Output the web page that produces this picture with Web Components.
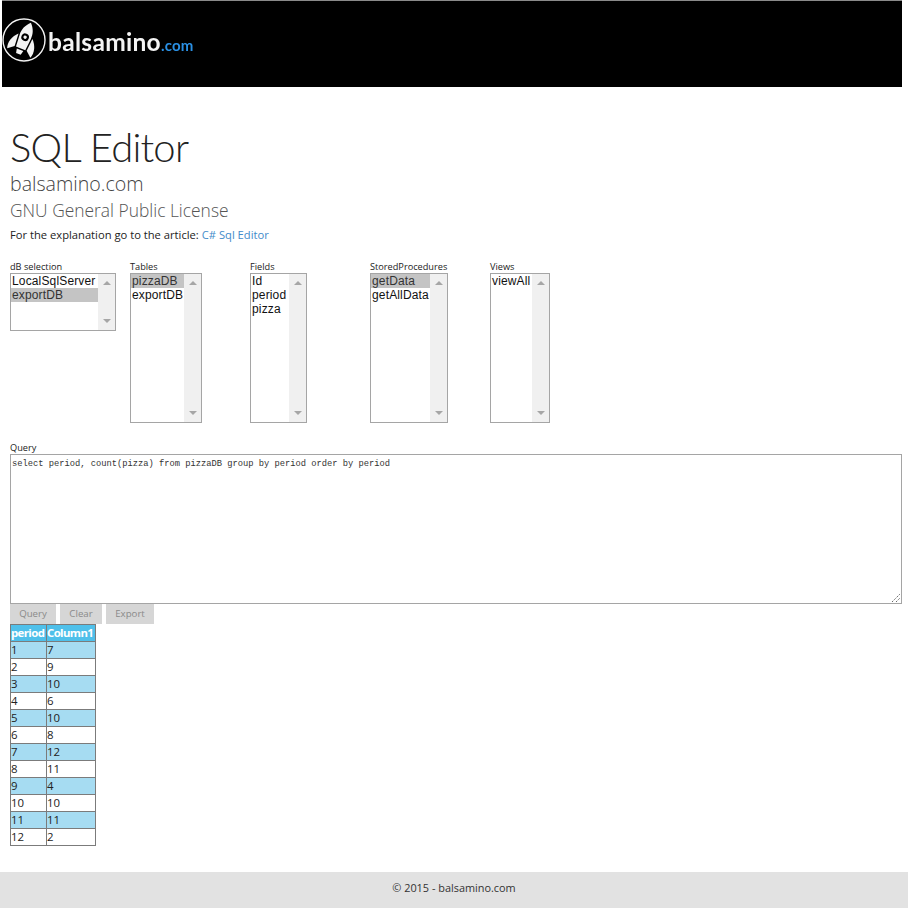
<!DOCTYPE html>
<html>
<head>
<meta charset="utf-8">
<title>SQL Editor</title>
<style>
  html, body { margin: 0; padding: 0; background: #fff; }
  body { font-family: "Open Sans", "Liberation Sans", sans-serif; color: #222; }
</style>
</head>
<body>
<app-header></app-header>
<page-intro heading="SQL Editor" site="balsamino.com" license="GNU General Public License">
  For the explanation go to the article: <a href="#">C# Sql Editor</a>
</page-intro>
<list-row>
  <sql-list label="dB selection" items="LocalSqlServer,exportDB" selected="1" box-width="106" box-height="58"></sql-list>
  <sql-list label="Tables" items="pizzaDB,exportDB" selected="0" box-width="72" box-height="150"></sql-list>
  <sql-list label="Fields" items="Id,period,pizza" box-width="57" box-height="150"></sql-list>
  <sql-list label="StoredProcedures" items="getData,getAllData" selected="0" box-width="78" box-height="150"></sql-list>
  <sql-list label="Views" items="viewAll" box-width="60" box-height="150"></sql-list>
</list-row>
<query-box label="Query">select period, count(pizza) from pizzaDB group by period order by period</query-box>
<button-row>
  <action-button style="width:46px">Query</action-button>
  <action-button style="width:42px">Clear</action-button>
  <action-button style="width:48px">Export</action-button>
</button-row>
<result-table></result-table>
<app-footer>© 2015 - balsamino.com</app-footer>

<script>
// small helper, every element just sets its shadow html once
class Base extends HTMLElement {
  render(html) {
    if (!this.shadowRoot) this.attachShadow({ mode: "open" });
    this.shadowRoot.innerHTML = html;
  }
}

class AppHeader extends Base {
  connectedCallback() {
    this.render(`
    <style>
      :host { display: block; border-top: 1px solid #8a8a8a; margin-left: 2px; width: 900px; }
      .bar { background: #000; height: 86px; display: flex; align-items: flex-start; box-sizing: border-box; padding: 16px 0 0 0; }
      .logo { display: flex; align-items: flex-start; filter: blur(.35px); }
      svg { display: block; flex: none; }
      .name { font: 700 24.5px/30px Lato, "Open Sans", sans-serif; color: #f4f4f4; letter-spacing: .3px; margin: 10px 0 0 0; }
      .tld { font: 700 15px/30px Lato, "Open Sans", sans-serif; color: #2a90e4; letter-spacing: .2px; margin: 13px 0 0 0; }
    </style>
    <div class="bar"><div class="logo">
      <svg width="46" height="46" viewBox="0 0 46 46">
        <circle cx="22" cy="23" r="21" fill="none" stroke="#f2f2f2" stroke-width="1.4"/>
        <g transform="rotate(22 22 23)" fill="#f4f4f4">
          <path d="M22 4.5 C26.5 9 28.5 14 28 20 L27 32 L17 32 L16 20 C15.500 14 17.500 9 22 4.500 Z"/>
          <circle cx="22" cy="20" r="3.8" fill="#000"/>
          <circle cx="22" cy="20" r="1.7" fill="#f4f4f4"/>
          <path d="M14.500 19 L15.500 32 L9.500 37 C7 31 9.500 24 14.500 19 Z"/>
          <path d="M29.500 19 L28.500 32 L34.500 37 C37 31 34.500 24 29.500 19 Z"/>
          <path d="M18.500 33.500 L25.500 33.500 L24.500 38 L19.500 38 Z"/>
        </g>
      </svg>
      <span class="name">balsamino</span><span class="tld">.com</span>
    </div></div>`);
  }
}

class PageIntro extends Base {
  connectedCallback() {
    this.render(`
    <style>
      :host { display: block; padding: 36px 10px 0; }
      h1 { margin: 0; font: 300 40px/48px Lato, "Open Sans", sans-serif; color: #222; letter-spacing: -.8px; }
      h2 { margin: 0; font: 300 19.6px/26px "Open Sans", sans-serif; color: #444; }
      h3 { margin: 0; font: 300 17.4px/27px "Open Sans", sans-serif; color: #555; }
      p { margin: 0; font: 400 11.2px/22px "Open Sans", sans-serif; color: #222; }
      ::slotted(a) { color: #428bca; text-decoration: none; }
    </style>
    <h1>${this.getAttribute("heading")}</h1>
    <h2>${this.getAttribute("site")}</h2>
    <h3>${this.getAttribute("license")}</h3>
    <p><slot></slot></p>`);
  }
}

class ListRow extends Base {
  connectedCallback() {
    this.render(`
    <style>
      :host { display: grid; grid-template-columns: repeat(5, 120px); align-items: start; padding: 15px 10px 0; height: 181px; }
    </style>
    <slot></slot>`);
  }
}

class SqlList extends Base {
  connectedCallback() {
    const items = this.getAttribute("items").split(",");
    const sel = this.getAttribute("selected");
    const w = this.getAttribute("box-width");
    const h = this.getAttribute("box-height");
    const rows = items.map((t, i) => `<div class="opt${String(i) === sel ? " on" : ""}">${t}</div>`).join("");
    this.render(`
    <style>
      :host { display: block; }
      label { display: block; font: 400 9.2px/12px "Open Sans", sans-serif; color: #222; height: 12px; white-space: nowrap; }
      .box { box-sizing: border-box; width: ${w}px; height: ${h}px; border: 1px solid #a5a5a5; display: flex; background: #fff; }
      .rows { flex: 1; min-width: 0; }
      .opt { font: 12px/14px "Liberation Sans", sans-serif; color: #111; padding-left: 1px; height: 14px; white-space: nowrap; letter-spacing: .15px; }
      .opt.on { background: #c4c4c4; color: #333; }
      .bar { flex: none; width: 17px; background: #f0f0f0; display: flex; flex-direction: column; justify-content: space-between; align-items: center; padding: 7px 0 7px; box-sizing: border-box; }
      .up { border: 4px solid transparent; border-top: 0; border-bottom: 4px solid #a6a6a6; }
      .down { border: 4px solid transparent; border-bottom: 0; border-top: 4px solid #a6a6a6; }
    </style>
    <label>${this.getAttribute("label")}</label>
    <div class="box"><div class="rows">${rows}</div><div class="bar"><i class="up"></i><i class="down"></i></div></div>`);
  }
}

class QueryBox extends Base {
  connectedCallback() {
    this.render(`
    <style>
      :host { display: block; padding: 0 6px 0 10px; }
      label { display: block; font: 400 9.2px/12px "Open Sans", sans-serif; color: #222; height: 12px; }
      .area { position: relative; box-sizing: border-box; width: 892px; height: 150px; border: 1px solid #a5a5a5; padding: 3px 1px; font: 8.75px/12px "Liberation Mono", monospace; color: #333; }
      svg { position: absolute; right: 0; bottom: 0; }
    </style>
    <label>${this.getAttribute("label")}</label>
    <div class="area"><slot></slot>
      <svg width="10" height="10" viewBox="0 0 10 10"><path d="M1 9 L9 1 M5 9 L9 5" stroke="#666" stroke-width="1" stroke-dasharray="1.4 1"/></svg>
    </div>`);
  }
}

class ButtonRow extends Base {
  connectedCallback() {
    this.render(`
    <style>
      :host { display: flex; gap: 4px; padding: 0 10px; height: 20px; }
    </style>
    <slot></slot>`);
  }
}

class ActionButton extends Base {
  connectedCallback() {
    this.render(`
    <style>
      :host { display: block; box-sizing: border-box; height: 20px; background: #d6d6d6; color: #8a8a8a; text-align: center; font: 400 9.7px/20px "Open Sans", sans-serif; }
    </style>
    <slot></slot>`);
  }
}

class ResultTable extends Base {
  connectedCallback() {
    const rows = [[1,7],[2,9],[3,10],[4,6],[5,10],[6,8],[7,12],[8,11],[9,4],[10,10],[11,11],[12,2]];
    const body = rows.map(r => `<tr><td>${r[0]}</td><td>${r[1]}</td></tr>`).join("");
    this.render(`
    <style>
      :host { display: block; padding: 0 10px; height: 248px; }
      table { border-collapse: collapse; table-layout: fixed; width: 85px; font: 400 11.4px/16px "Open Sans", sans-serif; color: #222; }
      th, td { border: 1px solid #7b7b7b; padding: 0; text-align: left; height: 16px; overflow: hidden; white-space: nowrap; }
      th { background: #4fc0ea; color: #fff; font-weight: 700; letter-spacing: -.6px; font-size: 11.4px; }
      tr:nth-child(odd) td { background: #a6dcf2; }
      col.a { width: 36px; } col.b { width: 49px; }
    </style>
    <table><colgroup><col class="a"><col class="b"></colgroup>
      <thead><tr><th>period</th><th>Column1</th></tr></thead>
      <tbody>${body}</tbody>
    </table>`);
  }
}

class AppFooter extends Base {
  connectedCallback() {
    this.render(`
    <style>
      :host { display: block; height: 36px; background: #e2e2e2; text-align: center; font: 400 10.9px/31px "Open Sans", sans-serif; color: #333; }
    </style>
    <slot></slot>`);
  }
}

customElements.define("app-header", AppHeader);
customElements.define("page-intro", PageIntro);
customElements.define("list-row", ListRow);
customElements.define("sql-list", SqlList);
customElements.define("query-box", QueryBox);
customElements.define("button-row", ButtonRow);
customElements.define("action-button", ActionButton);
customElements.define("result-table", ResultTable);
customElements.define("app-footer", AppFooter);
</script>
</body>
</html>
